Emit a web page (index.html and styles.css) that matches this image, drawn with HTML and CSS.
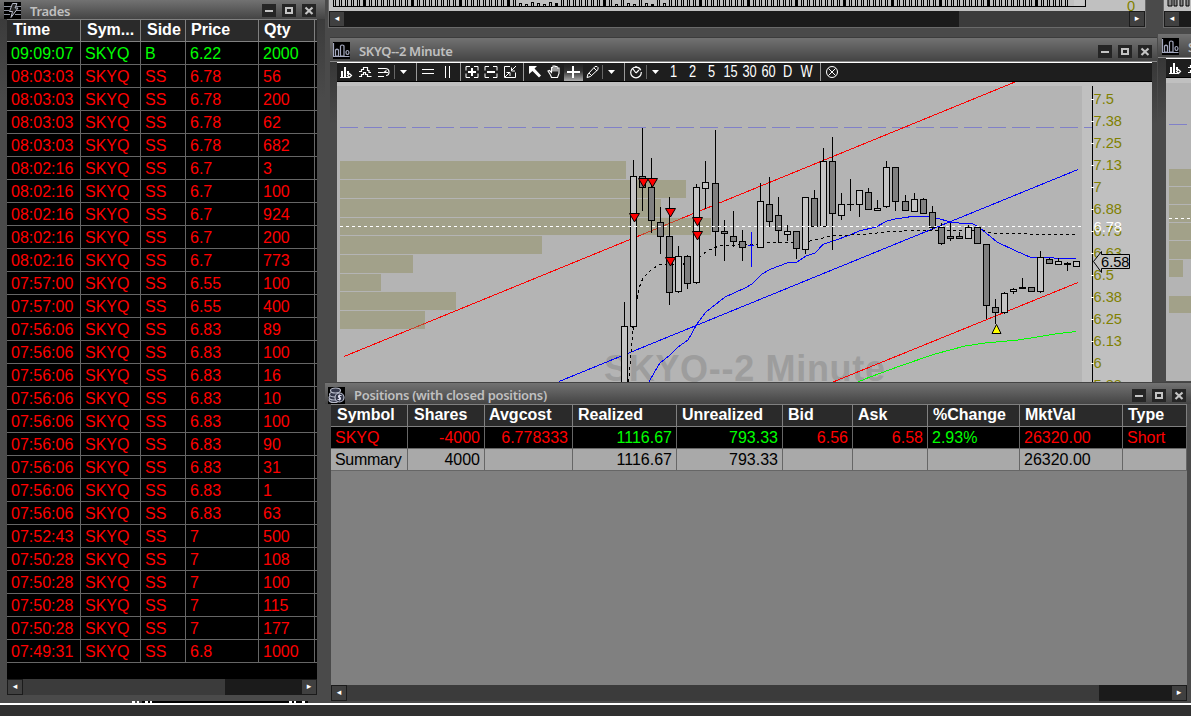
FILE: index.html
```html
<!DOCTYPE html>
<html lang="en">
<head>
<meta charset="utf-8">
<title>Trading desktop</title>
<link rel="stylesheet" href="styles.css">
</head>
<body>
<svg class="defs" width="0" height="0">
  <symbol id="i-chart" viewBox="0 0 17 17"><rect width="17" height="17" fill="#000"/><path d="M.5 1v13.500h16M2.500 14v-6q1.500-1.500 3 0v6zM7.500 14v-10q1.500-2 3.500 0v10zM13 10.500q0-2 1.500-2t1.500 2-1.500 2-1.500-2z" fill="none" stroke="#a4a8be" stroke-width="1.200"/></symbol>
  <symbol id="i-trades" viewBox="0 0 17 17"><rect width="17" height="17" fill="#000"/><path d="M0 4.500h7M0 8.500h5M0 12.500h6M12 4.500h5M12 8.500h5M11 12.500h6" stroke="#8b8f9c"/><path d="M8.500 1.500h4.500l-2 4.500h3l-7 9.500 1.500-6h-3z" fill="#222" stroke="#b8bccb"/></symbol>
  <symbol id="i-coins" viewBox="0 0 17 17"><rect width="17" height="17" fill="#000"/><g fill="#34384a" stroke="#b8bccb" stroke-width="1.200"><ellipse cx="6" cy="13" rx="5" ry="2.500"/><ellipse cx="6" cy="10.500" rx="5" ry="2.500"/><ellipse cx="6.500" cy="7.500" rx="5" ry="2.500"/><ellipse cx="7.500" cy="3.500" rx="5" ry="2.500"/><circle cx="11.500" cy="10.500" r="4.500"/></g><path d="M13.500 8.500h-3v2h2v2h-3M11.500 7.500v6" fill="none" stroke="#dde"/></symbol>
  <symbol id="w-min" viewBox="0 0 14 13"><path d="M3 7h8" stroke="#c4c4c4" stroke-width="2"/></symbol>
  <symbol id="w-max" viewBox="0 0 14 13"><path d="M4 4h6v5h-6z" fill="none" stroke="#c4c4c4" stroke-width="2"/></symbol>
  <symbol id="w-close" viewBox="0 0 14 13"><path d="M3.500 3.500l7 6.500M10.500 3.500l-7 6.500" stroke="#c4c4c4" stroke-width="2.200"/></symbol>
  <symbol id="t-bars" viewBox="0 0 18 18"><path d="M3 14.500h9" stroke="#fff"/><path d="M5 8v6M8 4v10M11 8v3" stroke="#fff" stroke-width="2"/><path d="M14.500 12.500l-2-2-2 2 2 2z" fill="none" stroke="#fff" stroke-width="1.200"/></symbol>
  <symbol id="t-wave" viewBox="0 0 19 18"><path d="M4 8.500h2.500v-2h2v-2h4v3h1.500v2h2M4 13.500h2.500v-2h2v-2h2v2h2v2h4" fill="none" stroke="#fff" stroke-width="1.200"/></symbol>
  <symbol id="t-lines" viewBox="0 0 19 18"><path d="M4 5.500h7M4 9.500h5M4 13.500h6M11 5.500q4 0 4 3.500t-3 3.500M12.500 7.500l-2.500 2h4" fill="none" stroke="#fff" stroke-width="1.200"/></symbol>
  <symbol id="t-tri" viewBox="0 0 14 18"><path d="M4 7h7l-3.500 4z" fill="#fff"/></symbol>
</svg>

<div class="desktop">
  <section class="window chart-top">
    <svg class="vol" width="816" height="11" id="volume"></svg>
    <div class="scrollbar"><span class="sb-btn">◂</span><span class="sb-space"></span><span class="sb-thumb top-thumb"></span><span class="sb-btn">▸</span></div>
  </section>
  <section class="window chart-top-right">
    <svg class="vol" width="28" height="11"><path d="M4 0v6h4V0M10 0v6h3V0M16 0v6h3V0M22 0v6h3V0" fill="#888" stroke="#000"/></svg>
    <div class="scrollbar"><span class="sb-btn">◂</span></div>
  </section>

  <section class="window chart-right">
    <header class="titlebar"><svg class="app-icon"><use href="#i-chart"/></svg><span>SPY</span></header>
    <div class="toolbar"><svg width="18" height="18"><use href="#t-bars"/></svg><svg width="19" height="18"><use href="#t-wave"/></svg></div>
    <svg class="plot" width="25" height="303" shape-rendering="crispEdges">
      <rect width="25" height="5" fill="#c0c0c0"/><rect y="5" width="25" height="298" fill="#b4b4b4"/>
      <g fill="#a2a189"><rect x="3" y="91" width="22" height="17"/><rect x="3" y="109" width="22" height="17"/><rect x="3" y="127" width="22" height="17"/><rect x="3" y="145" width="22" height="17"/><rect x="3" y="163" width="22" height="18"/><rect x="3" y="182" width="14" height="17"/><rect x="3" y="218" width="22" height="17"/></g>
      <path d="M3 46.500h18" stroke="#8080c8"/><path d="M3 140.500h22" stroke="#fff" stroke-dasharray="3 3"/>
    </svg>
  </section>

  <section class="window chart">
    <header class="titlebar"><svg class="app-icon"><use href="#i-chart"/></svg><span>SKYQ--2 Minute</span>
      <nav><svg><use href="#w-min"/></svg><svg><use href="#w-max"/></svg><svg><use href="#w-close"/></svg></nav></header>
    <div class="toolbar">
      <svg width="18" height="18"><use href="#t-bars"/></svg>
      <svg width="19" height="18"><use href="#t-wave"/></svg>
      <svg width="19" height="18"><use href="#t-lines"/></svg>
      <svg width="3" height="18"><path d="M1.500 2v14" stroke="#666"/></svg>
      <svg width="19" height="18"><use href="#t-tri" width="14" height="18"/></svg>
      <svg width="3" height="18"><path d="M1.500 0v18" stroke="#999"/></svg>
      <svg width="20" height="18"><path d="M4 6.500h12M4 10.500h12" stroke="#fff"/></svg>
      <svg width="20" height="18"><path d="M7.500 3v12M11.500 3v12" stroke="#fff"/></svg>
      <svg width="4" height="18"><path d="M2.500 0v18" stroke="#999"/></svg>
      <svg width="19" height="18"><path d="M8 3.500h-4v4M12 3.500h4v4M8 14.500h-4v-4M12 14.500h4v-4" fill="none" stroke="#fff"/><path d="M6 9h8M10 5v8" stroke="#fff" stroke-width="2"/></svg>
      <svg width="19" height="18"><path d="M8 3.500h-4v4M12 3.500h4v4M8 14.500h-4v-4M12 14.500h4v-4" fill="none" stroke="#fff"/><path d="M6 9h8" stroke="#fff" stroke-width="2"/></svg>
      <svg width="20" height="18"><path d="M10 3.500h-5.500v11h11v-5M5 14l5-5M6.500 9.500h3.500v3.500M16 3l-5 5M11.500 4.500v3.500h3.500" fill="none" stroke="#fff"/></svg>
      <svg width="5" height="18"><path d="M3.500 0v18" stroke="#999"/></svg>
      <svg width="19" height="18"><path d="M4 3h8l-2.500 2.500 6.500 7-2 2-6.500-6.500-3.500 3z" fill="#fff"/></svg>
      <svg width="20" height="18"><path d="M6.500 12l-2.500-4 1.500-.5 2 2v-5h1.500v4-5.500h2v5.500-5h2v5-3.500h2v5.500l-1.500 4h-6z" fill="none" stroke="#fff" stroke-width="1.100"/></svg>
      <svg class="active" width="19" height="18"><path d="M3 9h13M9 3v12" stroke="#fff" stroke-width="2"/></svg>
      <svg width="19" height="18"><path d="M4 14.500l1-3.500 7-7.500h2l1 1v2l-7.500 7zM6 10l3 3M11 5l3 3" fill="none" stroke="#fff"/></svg>
      <svg width="2" height="18"><path d="M.5 2v14" stroke="#666"/></svg>
      <svg width="18" height="18"><use href="#t-tri" width="14" height="18"/></svg>
      <svg width="4" height="18"><path d="M2.500 0v18" stroke="#999"/></svg>
      <svg width="19" height="18"><circle cx="10" cy="9.500" r="5.300" fill="none" stroke="#fff" stroke-width="1.200" stroke-dasharray="30 2"/><path d="M7 6l3 4M10 10l3-3M10 3v2" fill="none" stroke="#fff" stroke-width="1.200"/></svg>
      <svg width="3" height="18"><path d="M1.500 2v14" stroke="#666"/></svg>
      <svg width="16" height="18"><use href="#t-tri" width="14" height="18"/></svg>
      <span class="tf">1</span><span class="tf">2</span><span class="tf">5</span><span class="tf">15</span><span class="tf">30</span><span class="tf">60</span><span class="tf">D</span><span class="tf">W</span>
      <svg width="6" height="18"><path d="M4.500 0v18" stroke="#999"/></svg>
      <svg width="20" height="18"><circle cx="10" cy="9" r="5.500" fill="none" stroke="#fff"/><path d="M6.500 5.500l7 7M13.500 5.500l-7 7" stroke="#fff"/></svg>
    </div>
    <svg class="plot" id="price" width="815" height="300" viewBox="337 82 815 300"></svg>
  </section>

  <section class="window positions">
    <header class="titlebar"><svg class="app-icon"><use href="#i-coins"/></svg><span>Positions (with closed positions)</span>
      <nav><svg><use href="#w-min"/></svg><svg><use href="#w-max"/></svg><svg><use href="#w-close"/></svg></nav></header>
    <div class="panel">
      <div class="prow head"><span>Symbol</span><span>Shares</span><span>Avgcost</span><span>Realized</span><span>Unrealized</span><span>Bid</span><span>Ask</span><span>%Change</span><span>MktVal</span><span>Type</span></div>
      <div class="prow open"><span>SKYQ</span><span class="num">-4000</span><span class="num">6.778333</span><span class="num up">1116.67</span><span class="num up">793.33</span><span class="num">6.56</span><span class="num">6.58</span><span class="up">2.93%</span><span>26320.00</span><span>Short</span></div>
      <div class="prow summary"><span class="tight">Summary</span><span class="num">4000</span><span></span><span class="num">1116.67</span><span class="num">793.33</span><span></span><span></span><span></span><span>26320.00</span><span></span></div>
      <div class="blank"></div>
      <div class="scrollbar"><span class="sb-btn">◂</span><span class="sb-thumb pos-thumb"></span><span class="sb-space"></span><span class="sb-btn">▸</span></div>
    </div>
  </section>

  <section class="window trades">
    <header class="titlebar"><svg class="app-icon"><use href="#i-trades"/></svg><span>Trades</span>
      <nav><svg><use href="#w-min"/></svg><svg><use href="#w-max"/></svg><svg><use href="#w-close"/></svg></nav></header>
    <div class="panel">
      <div class="trow head"><span>Time</span><span>Sym...</span><span>Side</span><span>Price</span><span>Qty</span><span></span></div>
      <div id="trades"></div>
      <div class="blank"></div>
      <div class="scrollbar"><span class="sb-btn">◂</span><span class="sb-thumb tr-thumb"></span><span class="sb-space"></span><span class="sb-btn">▸</span></div>
    </div>
  </section>
  <footer class="taskbar"></footer>
  <svg class="peek" width="180" height="2" shape-rendering="crispEdges"><rect x="10" width="166" height="2"/><path d="M0 1h26M157 1h16" stroke="#fff" stroke-width="2" stroke-dasharray="3 2 2 6"/></svg>
</div>
<script src="app.js"></script>
</body>
</html>
```
FILE: styles.css
```css
* { box-sizing: border-box; }
body { margin: 0; background: #4a4a4a; font-family: "Liberation Sans", Arial, sans-serif; font-size: 16px; overflow: hidden; }
.defs { position: absolute; }
.desktop { position: relative; width: 1191px; height: 716px; overflow: hidden; background: #4a4a4a; }
svg { display: block; flex: none; }
.window { position: absolute; display: flex; flex-direction: column; overflow: hidden; background: #4a4a4a; }

.titlebar { display: flex; align-items: center; flex: none; background: linear-gradient(#727272, #444); color: #c0c0c0; font: 600 13px "Noto Sans", "Open Sans", sans-serif; letter-spacing: -.3px; white-space: nowrap; }
.titlebar nav { display: flex; gap: 6px; margin-left: auto; }
.titlebar nav svg { width: 14px; height: 13px; background: #252525; }
.app-icon { width: 17px; height: 17px; }
.titlebar span { margin-left: 9px; line-height: 16px; }

.scrollbar { display: flex; height: 16px; flex: none; background: #1b1b1b; }
.sb-btn { width: 16px; height: 16px; border: 1px solid #1b1b1b; background: #404040; color: #fff; font: 9px/13px "DejaVu Sans", sans-serif; text-align: center; flex: none; }
.sb-space { flex: 1; }
.sb-thumb { background: #3b3b3b; flex: none; }
.top-thumb { width: 170px; }
.pos-thumb { width: 752px; }
.tr-thumb { width: 202px; }
.vol { background: #c0c0c0; }

.chart-top { left: 328px; top: 0; width: 818px; height: 28px; border: solid #6a6a6a; border-width: 0 1px 1px; }
.chart-top-right { left: 1163px; top: 0; width: 28px; height: 28px; border-left: 1px solid #6a6a6a; border-bottom: 1px solid #6a6a6a; }

.chart { left: 330px; top: 37px; width: 827px; height: 345px; border-top: 1px solid #3c3c3c; padding: 0 5px 0 7px; background: linear-gradient(#303030, #4a4a4a 25%); }
.chart .titlebar { height: 24px; margin: 0 -5px 0 -7px; padding: 2px 5px 0 3px; border-bottom: 1px solid #888; }
.chart .titlebar nav { margin-top: 1px; }
.toolbar { display: flex; height: 20px; flex: none; background: #1e1e1e; border-top: 1px solid #fff; border-bottom: 1px solid #000; }
.active { background: linear-gradient(#1e1e1e, #333 45%, #aaa); }
.tf { width: 19px; display: flex; justify-content: center; font-size: 16px; line-height: 18px; color: #fff; transform: scaleX(.8); }

.chart-right { left: 1158px; top: 34px; width: 33px; height: 348px; padding-left: 8px; background: linear-gradient(#303030, #4a4a4a 25%); }
.chart-right .titlebar { height: 24px; margin-left: -8px; padding: 2px 0 0 4px; border-bottom: 1px solid #888; }

.positions { left: 325px; top: 382px; width: 866px; height: 320px; border-top: 1px solid #444; padding: 0 4px 0 6px; }
.positions .titlebar { height: 21px; margin: 0 -4px 0 -6px; padding: 3px 5px 0 3px; }
.positions .panel { display: flex; flex-direction: column; height: 297px; background: #808080; }
.prow { display: grid; grid-template-columns: 77px 77px 88px 104px 106px 70px 75px 92px 103px 64px; height: 22px; flex: none; }
.prow span, .trow span { border-right: 1px solid #666; border-bottom: 1px solid #666; padding: 0 4px; white-space: nowrap; overflow: hidden; }
.prow span { line-height: 21px; }
.prow .num { text-align: right; }
.prow .tight { letter-spacing: -.3px; }
.prow.open { background: #000; color: #f00; }
.prow.summary { background: #a9a9a9; color: #000; }
.prow .up { color: #0f0; }
.prow.head { height: 23px; }
.head { background: #2a2a2a; color: #fff; font-weight: bold; border-top: 1px solid #808080; }
.prow.head span, .trow.head span { padding: 0 0 0 5px; border-color: #808080; line-height: 20px; }
.prow.head span:nth-child(-n+2), .trow.head span:nth-child(-n+3) { padding-left: 6px; }
.prow.head span:nth-child(3) { padding-left: 4px; }
.blank { flex: 1; }

.trades { left: 0; top: 0; width: 325px; height: 702px; padding: 0 8px 0 7px; background: linear-gradient(#383838, #4a4a4a 14%); }
.trades .titlebar { height: 19px; margin: 0 -8px 0 -7px; padding: 2px 9px 0 4px; }
.trades .panel { display: flex; flex-direction: column; height: 676px; background: #000; }
.trow { display: grid; grid-template-columns: 74px 60px 45px 73px 56px 2px; height: 23px; flex: none; color: #f00; }
.trow span { line-height: 23px; }
.trow.head span:last-child, .trow span:last-child { padding: 0; border-right: 0; }
.trow.buy { color: #0f0; }
.trow.head { color: #fff; }

.taskbar { position: absolute; left: 0; top: 703px; width: 100%; height: 13px; background: #303030; border-top: 2px solid #fff; }
.peek { position: absolute; left: 132px; top: 701px; }
```
FILE: app.js
```js
const trades = [
  ['09:09:07', 'B', '6.22', 2000], ['08:03:03', 'SS', '6.78', 56], ['08:03:03', 'SS', '6.78', 200],
  ['08:03:03', 'SS', '6.78', 62], ['08:03:03', 'SS', '6.78', 682], ['08:02:16', 'SS', '6.7', 3],
  ['08:02:16', 'SS', '6.7', 100], ['08:02:16', 'SS', '6.7', 924], ['08:02:16', 'SS', '6.7', 200],
  ['08:02:16', 'SS', '6.7', 773], ['07:57:00', 'SS', '6.55', 100], ['07:57:00', 'SS', '6.55', 400],
  ['07:56:06', 'SS', '6.83', 89], ['07:56:06', 'SS', '6.83', 100], ['07:56:06', 'SS', '6.83', 16],
  ['07:56:06', 'SS', '6.83', 10], ['07:56:06', 'SS', '6.83', 100], ['07:56:06', 'SS', '6.83', 90],
  ['07:56:06', 'SS', '6.83', 31], ['07:56:06', 'SS', '6.83', 1], ['07:56:06', 'SS', '6.83', 63],
  ['07:52:43', 'SS', '7', 500], ['07:50:28', 'SS', '7', 108], ['07:50:28', 'SS', '7', 100],
  ['07:50:28', 'SS', '7', 115], ['07:50:28', 'SS', '7', 177], ['07:49:31', 'SS', '6.8', 1000],
];
document.getElementById('trades').innerHTML = trades.map(([t, s, p, q]) =>
  `<div class="trow${s === 'B' ? ' buy' : ''}"><span>${t}</span><span>SKYQ</span><span>${s}</span><span>${p}</span><span>${q}</span><span></span></div>`).join('');

// x, high, body top, body bottom, low, hollow
const candles = [
  [624,302,326,390,390,1],[633,160,176,327,330,1],[642,128,176,188,211,0],[651,158,187,221,233,0],
  [660,207,222,237,254,0],[669,197,236,293,305,0],[678,246,256,292,293,1],[687,255,256,284,289,0],
  [696,184,187,283,284,1],[705,161,182,189,209,1],[715,130,183,232,256,0],[724,220,231,234,261,0],
  [733,211,236,242,247,0],[742,230,241,248,261,0],[760,183,201,248,248,1],[769,177,204,222,227,0],
  [778,197,215,231,243,0],[787,225,231,235,241,1],[796,231,231,249,259,0],[805,197,197,250,254,1],
  [814,190,198,227,227,0],[823,148,161,227,227,1],[832,137,161,214,250,0],[841,193,204,216,220,1],
  [850,179,204,205,211,0],[859,190,190,205,217,1],[868,188,192,210,210,0],[877,200,208,211,211,1],
  [886,161,167,207,208,1],[895,167,167,202,211,0],[905,195,201,211,211,0],[914,193,199,212,212,1],
  [923,198,199,214,214,0],[932,206,212,228,230,0],[941,223,227,244,245,0],[950,223,236,239,241,0],
  [959,232,236,239,239,0],[968,225,227,239,239,1],[977,227,227,244,244,0],[986,244,244,306,319,0],
  [995,299,307,313,324,0],[1004,292,293,313,314,1],[1013,288,289,292,294,1],[1022,278,287,289,289,0],
  [1031,287,287,292,292,0],[1040,251,257,292,293,1],[1049,258,259,264,264,0],[1058,258,261,265,265,1],
  [1067,262,263,265,271,0],[1076,261,261,267,267,1],
];
const profile = [[161,18,626],[180,18,686],[199,18,661],[218,17,711],[236,18,542],[255,18,413],[274,17,381],[292,18,456],[311,18,425]];
const sells = [[634,213],[643,178],[652,178],[670,208],[697,217],[697,231],[670,257]];
const labels = ['7.5','7.38','7.25','7.13','7','6.88','6.75','6.63','6.5','6.38','6.25','6.13','6','5.88'];
const line = (pts, color, extra = '') => `<polyline points="${pts}" fill="none" stroke="${color}" ${extra}/>`;

let s = '<rect x="337" y="82" width="815" height="300" fill="#c0c0c0"/><rect x="337" y="86" width="745" height="296" fill="#b4b4b4"/>';
s += '<text x="604" y="381" textLength="281" font-size="36" font-weight="bold" fill="#9d9d9d">SKYQ--2 Minute</text>';
s += '<g shape-rendering="crispEdges">';
s += line('340,127.5 1092,127.5', '#8080c8', 'stroke-dasharray="18 6"');
s += line('344,356.5 1015,82', '#f00') + line('559,381.5 1078,169.5', '#00f') + line('833,382 1078,282.5', '#f00');
s += profile.map(([y, h, x]) => `<rect x="340" y="${y}" width="${x - 340}" height="${h}" fill="#8f8d5c" fill-opacity=".48"/>`).join('');
s += line('858,382 870,377 900,366 935,354 965,346 985,343 1018,340 1037,337 1055,334 1076,331.5', '#0f0');
s += line('649,382 655,371 660,363 670,355 678,347 688,340 697,324 706,312 725,297 745,288 752,284 762,274 771,269 787,263 797,262 806,256 815,253 823,244.5 833,241 850,235 859,231 876,227 887,221 895,219 912,216.500 930,217 940,219 952,222.500 973,224 980,228 997,242 1016,251 1031,257.500 1053,257.500 1055,258.500 1076,258.500', '#00f');
s += line('628.500,382 631,353 633,327 637,302 639,288 643,278 652,269 660,264.500 682,264.500 696,260 701,256 707,251 720,245.500 757,244.500 766,242.500 793,242.500 810,241 823,238 833,235.500 863,234.500 887,232 910,230.500 983,230.500 993,233.500 1027,233.500 1032,234.500 1076,234.500', '#000', 'stroke-dasharray="3 3"');
for (const [x, hi, t, b, lo, up] of candles) {
  s += `<rect x="${x}" y="${hi}" width="1" height="${lo - hi}"/><rect x="${x - 3}" y="${t}" width="7" height="${Math.max(1, b - t)}"/>`;
  if (b - t > 2) s += `<rect x="${x - 2}" y="${t + 1}" width="5" height="${b - t - 2}" fill="${up ? '#c4c4c4' : '#808080'}"/>`;
}
s += '<path d="M751.5 232v35M748 245.500h6" stroke="#00f"/>';
s += line('340,226.5 1081,226.5', '#fff', 'stroke-dasharray="3 3"');
s += '<rect x="1092" y="86" width="1" height="296"/>';
s += labels.map((_, i) => `<rect x="1091" y="${99 + 22 * i}" width="3" height="1" fill="#fff"/>`).join('') + '</g>';
s += sells.map(([x, y]) => `<path d="M${x - 4.5} ${y + .5}h10l-5 8.500z" fill="#f00" stroke="#000"/>`).join('');
s += '<path d="M996.5 324.500l4.500 9h-9z" fill="#ff0" stroke="#000"/>';
s += '<g font-size="14.67" fill="#808000">' + labels.map((l, i) => `<text x="1093.5" y="${104 + 22 * i}">${l}</text>`).join('') + '<text x="1093.5" y="232" fill="#fff">6.78</text></g>';
s += '<path d="M1093.500 261.500l8-10v3h28v14h-28v4z" fill="#c0c0c0" stroke="#000"/><text x="1101" y="267" font-size="14.67">6.58</text>';
document.getElementById('price').innerHTML = s;

let v = '<g shape-rendering="crispEdges"><rect x="745" y="0" width="10" height="6" fill="#c8c8c8"/>';
for (let x = 4, i = 0; x < 742; x += 6, i++) {
  const low = (x > 188 && x < 230) || (x > 285 && x < 340 && i % 3);
  const y = low ? 3 + (i * 7) % 3 : -2, solid = i % 8 === 5;
  v += `<rect x="${x + .5}" y="${y - .5}" width="2" height="${7 - y}" fill="${solid ? '#000' : '#c0c0c0'}" stroke="#000"/>`;
}
v += '<path d="M4 6.500h752.500V0" fill="none" stroke="#000"/></g><text x="798" y="10.500" font-size="14.67" fill="#808000">0</text>';
document.getElementById('volume').innerHTML = v;
```
